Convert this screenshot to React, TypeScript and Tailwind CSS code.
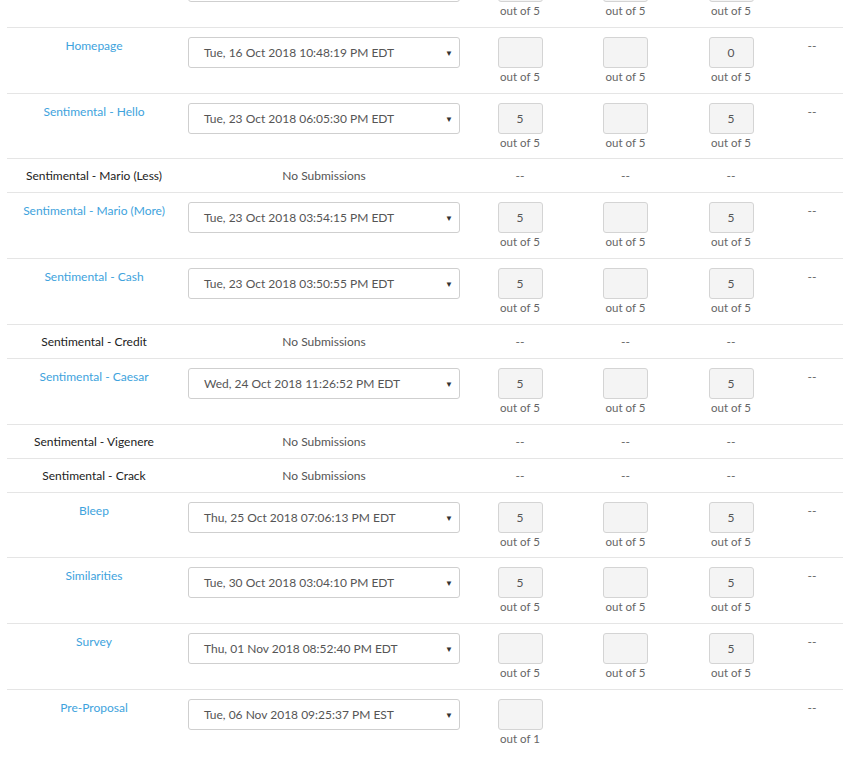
import React from 'react'

type Row = {
  name: string
  date?: string
  scores?: (string | null)[]
  outOf?: number
  h?: string
}

// row heights in the source alternate by a pixel, keep them as measured
const rows: Row[] = [
  { name: 'Previous', date: 'Mon, 15 Oct 2018 09:12:00 PM EDT', scores: ['', '', ''], h: 'h-[66px]' },
  { name: 'Homepage', date: 'Tue, 16 Oct 2018 10:48:19 PM EDT', scores: ['', '', '0'], h: 'h-[66px]' },
  { name: 'Sentimental - Hello', date: 'Tue, 23 Oct 2018 06:05:30 PM EDT', scores: ['5', '', '5'], h: 'h-[65px]' },
  { name: 'Sentimental - Mario (Less)' },
  { name: 'Sentimental - Mario (More)', date: 'Tue, 23 Oct 2018 03:54:15 PM EDT', scores: ['5', '', '5'], h: 'h-[66px]' },
  { name: 'Sentimental - Cash', date: 'Tue, 23 Oct 2018 03:50:55 PM EDT', scores: ['5', '', '5'], h: 'h-[66px]' },
  { name: 'Sentimental - Credit' },
  { name: 'Sentimental - Caesar', date: 'Wed, 24 Oct 2018 11:26:52 PM EDT', scores: ['5', '', '5'], h: 'h-[66px]' },
  { name: 'Sentimental - Vigenere' },
  { name: 'Sentimental - Crack' },
  { name: 'Bleep', date: 'Thu, 25 Oct 2018 07:06:13 PM EDT', scores: ['5', '', '5'], h: 'h-[65px]' },
  { name: 'Similarities', date: 'Tue, 30 Oct 2018 03:04:10 PM EDT', scores: ['5', '', '5'], h: 'h-[66px]' },
  { name: 'Survey', date: 'Thu, 01 Nov 2018 08:52:40 PM EDT', scores: ['', '', '5'], h: 'h-[66px]' },
  { name: 'Pre-Proposal', date: 'Tue, 06 Nov 2018 09:25:37 PM EST', scores: ['', null, null], outOf: 1, h: 'h-[66px]' },
]

const cols = 'grid grid-cols-[174px_286px_106px_105px_106px_56px]'

function ScoreCell({ value, outOf }: { value: string | null; outOf: number }) {
  if (value === null) return <div />
  return (
    <div className="flex flex-col items-center pt-[9px]">
      <div className="w-[45px] h-[31px] rounded-[3px] border border-[#d4d4d4] bg-[#f4f4f4] flex items-center justify-center text-[12px] text-[#555]">
        {value}
      </div>
      <div className="mt-[1px] text-[11.5px] leading-[16px] text-[#666]">out of {outOf}</div>
    </div>
  )
}

function TableRow({ row, last }: { row: Row; last: boolean }) {
  if (!row.date) {
    return (
      <div className={`${cols} h-[34px] items-center border-b border-[#e5e5e5] text-[12px] text-center`}>
        <div className="text-[#222]">{row.name}</div>
        <div className="text-[#555]">No Submissions</div>
        <div className="text-[#666]">--</div>
        <div className="text-[#666]">--</div>
        <div className="text-[#666]">--</div>
        <div />
      </div>
    )
  }
  return (
    <div className={`${cols} ${row.h} text-[12px] text-center ${last ? '' : 'border-b border-[#e5e5e5]'}`}>
      <div className="pt-[9px] text-[#3ea3dd]">{row.name}</div>
      <div className="px-[7px] pt-[9px]">
        <div className="h-[31px] rounded-[3px] border border-[#cfcfcf] bg-white flex items-center justify-between pl-[15px] pr-[6px] text-[#555]">
          <span>{row.date}</span>
          <span className="text-[8px] text-[#333]">▼</span>
        </div>
      </div>
      {row.scores!.map((s, i) => (
        <ScoreCell key={i} value={s} outOf={row.outOf ?? 5} />
      ))}
      <div className="pt-[9px] text-[#666]">--</div>
    </div>
  )
}

export default function App() {
  return (
    <div className="w-[843px] h-[772px] overflow-hidden bg-white" style={{ fontFamily: 'Lato, "Open Sans", sans-serif' }}>
      <div className="-mt-[38px] ml-[7px]">
        {rows.map((r, i) => (
          <TableRow key={i} row={r} last={i === rows.length - 1} />
        ))}
      </div>
    </div>
  )
}
